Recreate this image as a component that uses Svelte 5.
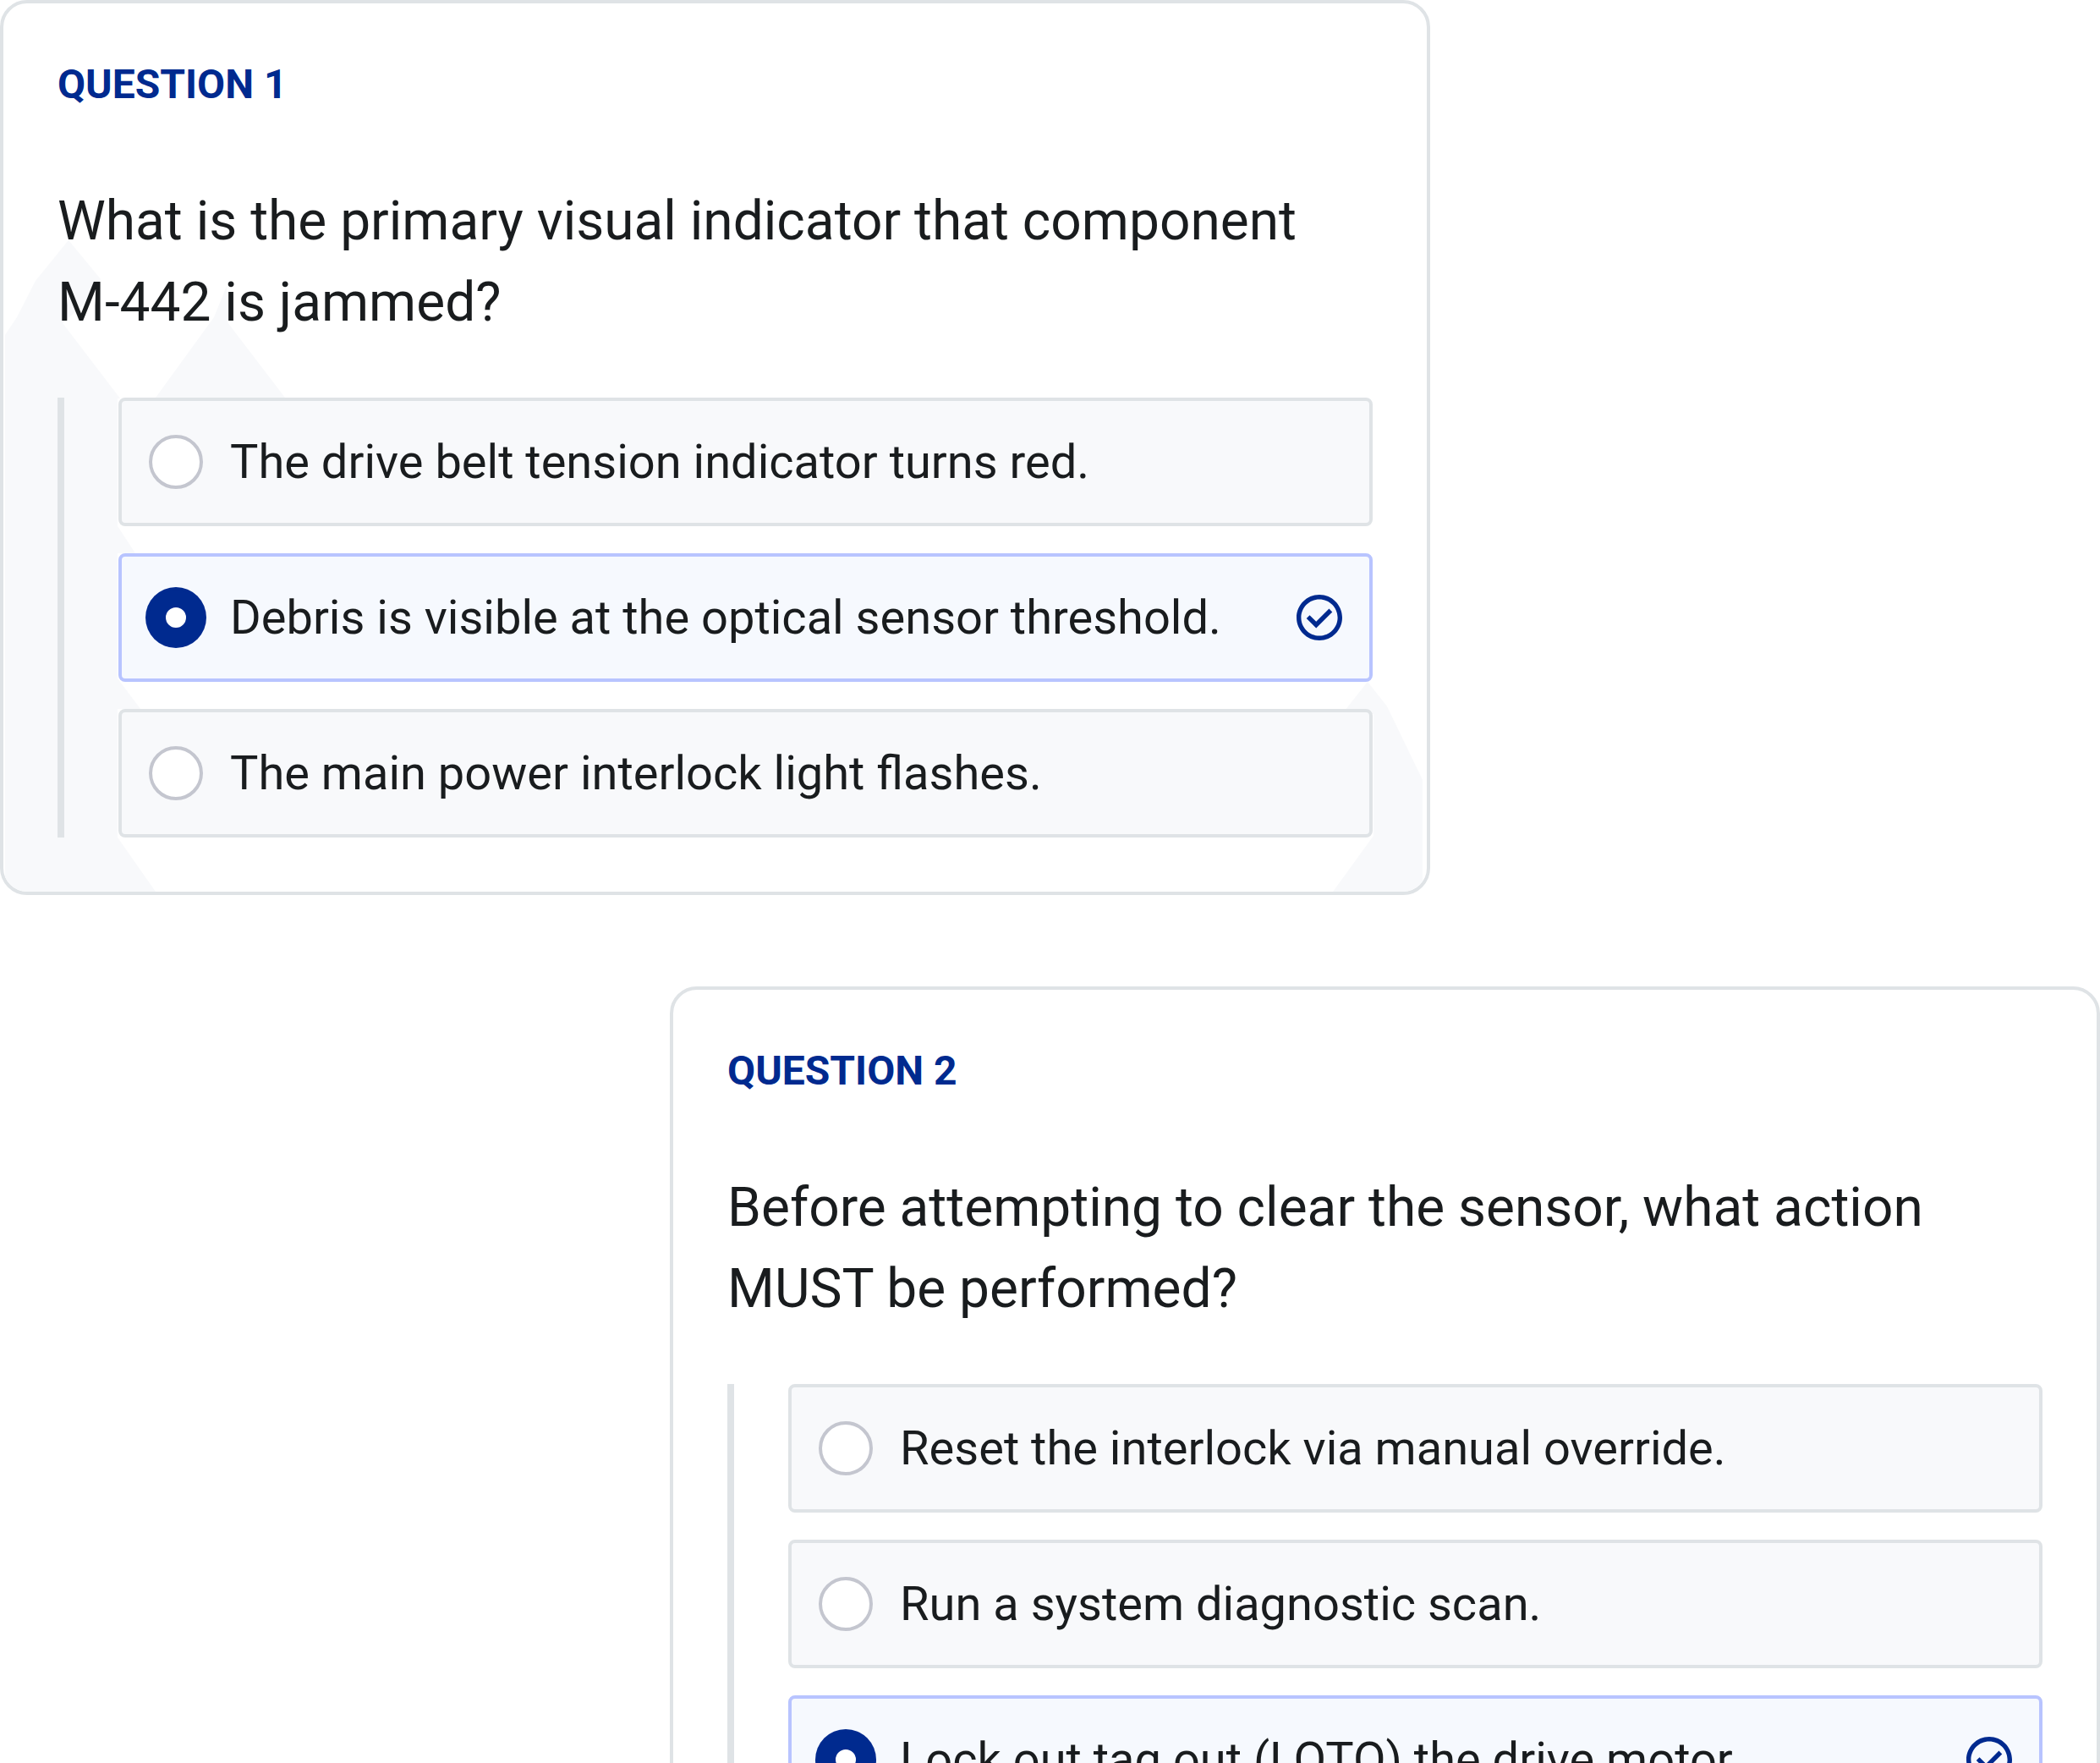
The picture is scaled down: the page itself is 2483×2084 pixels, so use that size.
<script>
  const questions = [
    {
      id: 'q1',
      title: 'Question 1',
      text: 'What is the primary visual indicator that component M-442 is jammed?',
      options: [
        'The drive belt tension indicator turns red.',
        'Debris is visible at the optical sensor threshold.',
        'The main power interlock light flashes.'
      ],
      backdrop: true
    },
    {
      id: 'q2',
      title: 'Question 2',
      text: 'Before attempting to clear the sensor, what action MUST be performed?',
      options: [
        'Reset the interlock via manual override.',
        'Run a system diagnostic scan.',
        'Lock out tag out (LOTO) the drive motor.'
      ],
      backdrop: false
    }
  ]

  let answers = $state({ q1: 1, q2: 2 })
</script>

<main>
  {#each questions as question}
    <section class="card" aria-labelledby="{question.id}-title">
      {#if question.backdrop}
        <svg class="peaks left" viewBox="0 0 400 800" aria-hidden="true">
          <path d="M2 142 16 121 38 78 77 30 115 76 98 103 70 128 138 217H135V368L156 400 135 400V548L162 584H135V736L180 800H2Z" />
          <path d="M264 84 249 121 180 216V230H340L333 216 265 127Z" />
        </svg>
        <svg class="peaks right" viewBox="0 0 120 260" aria-hidden="true">
          <path d="M50 12 73 41 115 128V260H9L57 194V50L23 46Z" />
        </svg>
      {/if}

      <h2 id="{question.id}-title">{question.title}</h2>
      <p id="{question.id}-text">{question.text}</p>

      <div class="options" role="radiogroup" aria-labelledby="{question.id}-text">
        {#each question.options as option, i}
          <label class="option" class:selected={answers[question.id] === i}>
            <input type="radio" name={question.id} value={i} bind:group={answers[question.id]} />
            <span>{option}</span>
            {#if answers[question.id] === i}
              <svg class="check" viewBox="2 2 20 20" aria-hidden="true">
                <path d="M10.6 16.6l7.05-7.05-1.4-1.4-5.65 5.65-2.85-2.85-1.4 1.4z" />
                <path d="M12 2C6.48 2 2 6.48 2 12s4.48 10 10 10 10-4.48 10-10S17.52 2 12 2zm0 18c-4.41 0-8-3.59-8-8s3.59-8 8-8 8 3.59 8 8-3.59 8-8 8z" />
              </svg>
            {/if}
          </label>
        {/each}
      </div>
    </section>
  {/each}
</main>

<style>
  :global(body) {
    background: #fff;
  }
  main {
    display: flex;
    flex-direction: column;
    gap: 108px;
    height: 100vh;
    overflow: hidden;
    color: #191c1e;
    font-family: Roboto, sans-serif;
  }
  .card {
    position: relative;
    flex: none;
    box-sizing: border-box;
    width: 68.1%;
    padding: 64px;
    border: 4px solid #dfe3e6;
    border-radius: 32px;
    background: #fff;
    overflow: hidden;
  }
  .card:nth-child(even) {
    align-self: flex-end;
  }
  .peaks {
    position: absolute;
    bottom: 0;
    fill: #f8f9fb;
    pointer-events: none;
  }
  .peaks.left {
    left: 0;
    width: 400px;
    height: 800px;
  }
  .peaks.right {
    right: 0;
    width: 120px;
    height: 260px;
  }
  h2 {
    position: relative;
    margin: 0 0 82px;
    color: #002a8f;
    font-size: 48px;
    font-weight: 700;
    line-height: 64px;
    text-transform: uppercase;
  }
  p {
    position: relative;
    margin: 0 0 64px;
    padding-right: 32px;
    font-size: 64px;
    line-height: 96px;
  }
  .options {
    position: relative;
    display: flex;
    flex-direction: column;
    gap: 32px;
    padding-left: 64px;
    border-left: 8px solid #dfe3e6;
  }
  .option {
    display: flex;
    align-items: center;
    gap: 32px;
    padding: 32px;
    border: 4px solid #dfe3e6;
    border-radius: 8px;
    background: #f8f9fb;
    font-size: 56px;
    line-height: 80px;
    cursor: pointer;
  }
  .option.selected {
    border-color: #b8c4ff;
    background: #f6f9fe;
  }
  .option span {
    flex: 1;
  }
  input {
    appearance: none;
    flex: none;
    box-sizing: border-box;
    width: 64px;
    height: 64px;
    margin: 0;
    border: 4px solid #c4c6cf;
    border-radius: 50%;
    background: #fff;
    cursor: pointer;
  }
  input:checked {
    border: 20px solid #002a8f;
    box-shadow: 0 0 0 4px #002a8f;
  }
  .check {
    flex: none;
    width: 54px;
    height: 54px;
    fill: #002a8f;
  }
</style>
